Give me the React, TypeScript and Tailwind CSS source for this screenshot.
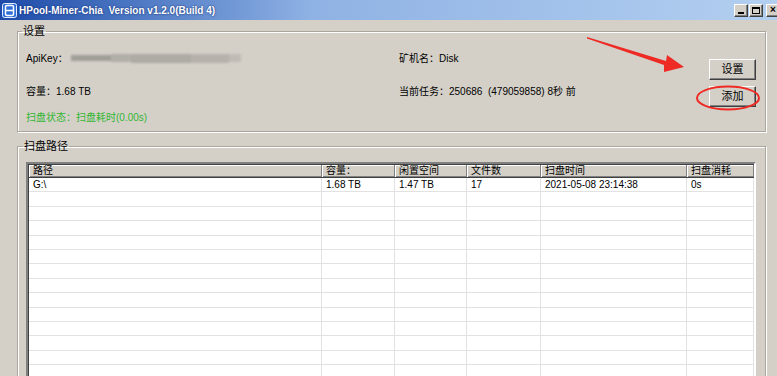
import React from "react";

const font = { fontFamily: '"Liberation Sans", "Noto Sans CJK SC", sans-serif' };

const cols = [
	{ label: "路径", w: "w-[293px]" },
	{ label: "容量：", w: "w-[73px]" },
	{ label: "闲置空间", w: "w-[72px]" },
	{ label: "文件数", w: "w-[74px]" },
	{ label: "扫盘时间", w: "w-[146px]" },
	{ label: "扫盘消耗", w: "flex-1" },
];

const rows = [["G:\\", "1.68 TB", "1.47 TB", "17", "2021-05-08 23:14:38", "0s"]];

function WinButton({ children }: { children: React.ReactNode }) {
	return (
		<div className="w-[14px] h-[13px] flex items-center justify-center bg-[#d4d0c8] border border-t-white border-l-white border-r-[#404040] border-b-[#404040] shadow-[inset_-1px_-1px_0_#808080] text-black text-[10px] font-bold leading-none">
			{children}
		</div>
	);
}

function Button({ children }: { children: React.ReactNode }) {
	return (
		<button className="w-[47px] h-[21px] flex items-center justify-center bg-[#d4d0c8] border border-t-white border-l-white border-r-[#404040] border-b-[#404040] shadow-[inset_-1px_-1px_0_#808080] text-[11px] text-black leading-none">
			{children}
		</button>
	);
}

function AppIcon() {
	return (
		<svg width="15" height="15" viewBox="0 0 15 15">
			<rect x="0.5" y="0.5" width="14" height="14" rx="2" fill="#2f6fd6" stroke="#e8f0ff" />
			<rect x="3.5" y="2.5" width="8" height="10" rx="1.5" fill="none" stroke="#ffffff" strokeWidth="1.5" />
			<line x1="3.5" y1="7.5" x2="11.5" y2="7.5" stroke="#ffffff" strokeWidth="1.5" />
		</svg>
	);
}

export default function App() {
	return (
		<div
			className="relative w-[777px] h-[376px] overflow-hidden bg-[#d4d0c8] text-[10px] text-black"
			style={font}
		>
			{/* title bar */}
			<div className="h-[20px] flex items-center pl-[2px] bg-gradient-to-r from-[#1d4aa8] via-[#8fb2e4] via-40% to-[#b3cff0]">
				<AppIcon />
				<span className="ml-[2px] text-white font-bold text-[10px] [text-shadow:0_0_2px_#0a246a]">
					HPool-Miner-Chia&nbsp; Version v1.2.0(Build 4)
				</span>
				<div className="ml-auto flex items-center gap-[1px] mr-[-3px]">
					<WinButton>
						<span className="block w-[6px] h-[2px] bg-black mt-[6px]" />
					</WinButton>
					<WinButton>
						<span className="block w-[8px] h-[7px] border border-black border-t-2" />
					</WinButton>
					<div className="w-[1px]" />
					<WinButton>×</WinButton>
				</div>
			</div>

			{/* settings group */}
			<fieldset className="ml-[17px] mt-[5px] w-[749px] h-[107px] border border-[#aaa69e] shadow-[inset_1px_1px_0_#ffffff,1px_1px_0_#ffffff]">
				<legend className="ml-[4px] px-[1px] text-[11px] leading-[12px]">设置</legend>
				<div className="flex pl-[8px]">
					<div className="w-[373px] flex flex-col">
						<div className="mt-[15px] h-[12px] flex items-center">
							<span>ApiKey：</span>
							<span className="ml-[3px] flex items-center blur-[1px]">
								<span className="w-[40px] h-[6px] bg-[#a29e98]" />
								<span className="w-[20px] h-[8px] bg-[#b2aea8]" />
								<span className="w-[60px] h-[9px] bg-[#aeaaa4]" />
								<span className="w-[38px] h-[9px] bg-[#b6b2ab]" />
								<span className="w-[12px] h-[8px] bg-[#c0bcb5]" />
							</span>
						</div>
						<div className="mt-[22px] h-[12px] leading-[12px]">容量：1.68 TB</div>
						<div className="mt-[14px] h-[12px] leading-[12px] text-[#33b633]">扫盘状态：扫盘耗时(0.00s)</div>
					</div>
					<div className="flex-1 flex flex-col">
						<div className="mt-[16px] h-[12px] leading-[12px]">矿机名：Disk</div>
						<div className="mt-[21px] h-[12px] leading-[12px] whitespace-pre">当前任务：250686  (479059858) 8秒 前</div>
					</div>
					<div className="flex flex-col gap-[6px] pt-[22px] pr-[9px]">
						<Button>设置</Button>
						<Button>添加</Button>
					</div>
				</div>
			</fieldset>

			{/* scan path group */}
			<fieldset className="ml-[17px] mt-[8px] w-[749px] h-[260px] border border-[#aaa69e] shadow-[inset_1px_1px_0_#ffffff,1px_1px_0_#ffffff]">
				<legend className="ml-[5px] px-[1px] text-[11px] leading-[12px]">扫盘路径</legend>
				<div className="ml-[8px] mt-[10px] w-[730px] h-[230px] border-2 border-t-[#808080] border-l-[#808080] border-r-white border-b-white shadow-[inset_1px_1px_0_#404040] bg-white pt-[1px] pl-[1px]">
					<div className="flex h-[13px] bg-[#d4d0c8] border-b border-[#404040] shadow-[0_-1px_0_#808080_inset]">
						{cols.map((c) => (
							<div
								key={c.label}
								className={`${c.w} h-full pl-[4px] leading-[12px] border-r border-[#808080] shadow-[inset_1px_1px_0_#ffffff]`}
							>
								{c.label}
							</div>
						))}
					</div>
					{Array.from({ length: 15 }).map((_, r) => (
						<div key={r} className="flex h-[14.4px] border-b border-[#e2e2e2]">
							{cols.map((c, i) => (
								<div key={c.label} className={`${c.w} h-full pl-[4px] leading-[14px] border-r border-[#e2e2e2]`}>
									{rows[r]?.[i] ?? ""}
								</div>
							))}
						</div>
					))}
				</div>
			</fieldset>

			{/* annotations */}
			<svg className="absolute left-0 top-0 pointer-events-none" width="777" height="376">
				<polygon points="587,37 666,61 667,55 684,67 664,72 664,65 587,38.5" fill="#ee2a24" />
				<ellipse cx="728" cy="98" rx="31" ry="11.5" fill="none" stroke="#ee2a24" strokeWidth="2" />
			</svg>
		</div>
	);
}
